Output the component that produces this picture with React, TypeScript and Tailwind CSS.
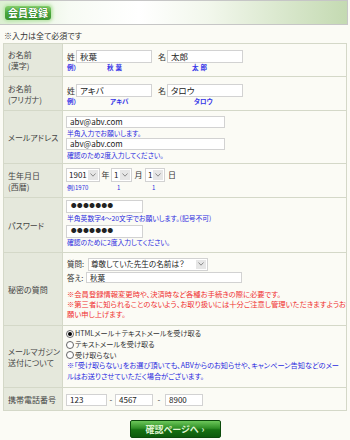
import React from "react";

function Inp({ cls, children }: { cls: string; children?: React.ReactNode }) {
  return (
    <div
      className={`bg-white border border-[#d2d2d2] flex items-center pl-[3px] text-[#222] overflow-hidden whitespace-nowrap shrink-0 ${cls}`}
    >
      {children}
    </div>
  );
}

function Sel({ cls, children }: { cls: string; children?: React.ReactNode }) {
  return (
    <div className={`bg-white border border-[#d2d2d2] flex items-stretch text-[#222] shrink-0 ${cls}`}>
      <span className="flex-1 flex items-center pl-[2px] whitespace-nowrap overflow-hidden">{children}</span>
      <span className="w-[10px] my-[1px] mr-[1px] bg-[#e6e6e6] flex items-center justify-center">
        <svg width="6" height="4" viewBox="0 0 6 4">
          <path d="M0.5 0.5 L3 3.2 L5.5 0.5" stroke="#8a8a8a" strokeWidth="1" fill="none" />
        </svg>
      </span>
    </div>
  );
}

function Radio({ checked }: { checked?: boolean }) {
  return (
    <span className="w-[8px] h-[8px] rounded-full border border-[#666] bg-white flex items-center justify-center mr-[1px] shrink-0">
      {checked && <span className="w-[4px] h-[4px] rounded-full bg-black" />}
    </span>
  );
}

const rowCls = "flex border-b border-[#d4d8c8]";
const labelCls =
  "w-[59px] shrink-0 bg-[#e5e8dc] border-r border-[#d4d8c8] flex flex-col justify-center pl-[4px] text-[8px] leading-[11px] text-[#444]";

export default function App() {
  return (
    <div className="w-[350px] h-[440px] overflow-hidden bg-[#fbfbf5] text-[#333] font-['Noto_Sans_CJK_JP','Liberation_Sans',sans-serif] [font-feature-settings:'palt']">
      {/* header */}
      <div className="w-[348px] h-[25px] border-t border-b border-r border-[#c6c6c6] bg-[linear-gradient(90deg,#dcefd2_0%,#f7fbf4_20%,#ffffff_40%,#f2f7ec_60%,#c4dab2_100%)] flex items-center pl-[5px]">
        <span className="h-[14px] px-[3px] rounded-[3px] bg-[linear-gradient(180deg,#86cf6e_0%,#4aa83c_50%,#3a9530_100%)] shadow-[0_0_3px_2px_#bfe6b0] flex items-center text-[10px] font-bold text-white leading-none [text-shadow:0_0_1px_#1d6a18,0_0_1px_#1d6a18]">
          会員登録
        </span>
      </div>

      {/* note */}
      <div className="h-[18px] pl-[4px] pt-[6px] text-[8px] leading-[10px] text-[#333]">※入力は全て必須です</div>

      {/* table */}
      <div className="mx-[3px] border-t border-l border-r border-[#d4d8c8]">
        {/* row 1 */}
        <div className={`${rowCls} h-[33px]`}>
          <div className={labelCls}>
            <span>お名前</span>
            <span>(漢字)</span>
          </div>
          <div className="flex-1 pl-[3px] pt-[6px]">
            <div className="flex items-center h-[13px] text-[8px]">
              <span className="w-[10px] pl-[1px]">姓</span>
              <Inp cls="w-[76px] h-[13px] text-[8.5px]">秋葉</Inp>
              <span className="ml-[6px] w-[9px]">名</span>
              <Inp cls="w-[76px] h-[13px] text-[8.5px]">太郎</Inp>
            </div>
            <div className="flex h-[10px] items-center text-[6.5px] font-bold text-[#3535e8]">
              <span className="w-[41px] pl-[1px]">例）</span>
              <span className="w-[85px] tracking-[2px]">秋葉</span>
              <span className="tracking-[2px]">太郎</span>
            </div>
          </div>
        </div>

        {/* row 2 */}
        <div className={`${rowCls} h-[34px]`}>
          <div className={labelCls}>
            <span>お名前</span>
            <span>(フリガナ)</span>
          </div>
          <div className="flex-1 pl-[3px] pt-[7px]">
            <div className="flex items-center h-[13px] text-[8px]">
              <span className="w-[10px] pl-[1px]">姓</span>
              <Inp cls="w-[76px] h-[13px] text-[8.5px]">アキバ</Inp>
              <span className="ml-[6px] w-[9px]">名</span>
              <Inp cls="w-[76px] h-[13px] text-[8.5px]">タロウ</Inp>
            </div>
            <div className="flex h-[9px] items-center text-[6.5px] font-bold text-[#3535e8]">
              <span className="w-[44px] pl-[1px]">例）</span>
              <span className="w-[84px]">アキバ</span>
              <span>タロウ</span>
            </div>
          </div>
        </div>

        {/* row 3 */}
        <div className={`${rowCls} h-[53px]`}>
          <div className={labelCls}>
            <span>メールアドレス</span>
          </div>
          <div className="flex-1 pl-[3px] pt-[5px]">
            <Inp cls="w-[159px] h-[12px] text-[8px]">abv@abv.com</Inp>
            <div className="h-[10px] leading-[10px] text-[6.8px] text-[#2a2ae0] pl-[1px]">半角入力でお願いします。</div>
            <Inp cls="w-[159px] h-[12px] text-[8px]">abv@abv.com</Inp>
            <div className="h-[10px] leading-[10px] text-[6.8px] text-[#2a2ae0] pl-[1px]">確認のため2度入力してください。</div>
          </div>
        </div>

        {/* row 4 */}
        <div className={`${rowCls} h-[34px]`}>
          <div className={labelCls}>
            <span>生年月日</span>
            <span>(西暦)</span>
          </div>
          <div className="flex-1 pl-[3px] pt-[4px]">
            <div className="flex items-center h-[14px] text-[8px]">
              <Sel cls="w-[34px] h-[14px] text-[8px]">1901</Sel>
              <span className="w-[11px] text-center">年</span>
              <Sel cls="w-[21px] h-[14px] text-[8px]">1</Sel>
              <span className="w-[13px] text-center">月</span>
              <Sel cls="w-[20px] h-[14px] text-[8px]">1</Sel>
              <span className="ml-[3px]">日</span>
            </div>
            <div className="flex h-[10px] items-center text-[6px] text-[#2a2ae0]">
              <span className="w-[51px] pl-[1px]">例)1970</span>
              <span className="w-[35px]">1</span>
              <span>1</span>
            </div>
          </div>
        </div>

        {/* row 5 */}
        <div className={`${rowCls} h-[55px]`}>
          <div className={labelCls}>
            <span>パスワード</span>
          </div>
          <div className="flex-1 pl-[3px] pt-[2px]">
            <Inp cls="w-[77px] h-[13px] text-[5.5px] tracking-[0.6px] pl-[4px]">●●●●●●●</Inp>
            <div className="h-[11px] leading-[11px] text-[6.8px] text-[#2a2ae0] pl-[1px] whitespace-nowrap">
              半角英数字4～20文字でお願いします。(記号不可)
            </div>
            <div className="mt-[1px]">
              <Inp cls="w-[77px] h-[13px] text-[5.5px] tracking-[0.6px] pl-[4px]">●●●●●●●</Inp>
            </div>
            <div className="h-[9px] leading-[9px] text-[6.8px] text-[#2a2ae0] pl-[1px]">確認のために2度入力してください。</div>
          </div>
        </div>

        {/* row 6 */}
        <div className={`${rowCls} h-[73px]`}>
          <div className={labelCls}>
            <span>秘密の質問</span>
          </div>
          <div className="flex-1 pl-[3px] pt-[5px]">
            <div className="flex items-center h-[12px] text-[7.5px]">
              <span className="w-[22px] pl-[1px]">質問:</span>
              <Sel cls="w-[120px] h-[13px] text-[7.6px]">尊敬していた先生の名前は？</Sel>
            </div>
            <div className="flex items-center h-[11px] mt-[2px] text-[7.5px]">
              <span className="w-[20px] pl-[1px]">答え:</span>
              <Inp cls="w-[156px] h-[11px] text-[7.6px] pl-[2px]">秋葉</Inp>
            </div>
            <div className="mt-[6px] text-[7.3px] leading-[10px] text-[#f03030] pl-[1px] whitespace-nowrap">
              ※会員登録情報変更時や、決済時など各種お手続きの際に必要です。
              <br />
              ※第三者に知られることのないよう、お取り扱いには十分ご注意し管理いただきますようお
              <br />
              願い申し上げます。
            </div>
          </div>
        </div>

        {/* row 7 */}
        <div className={`${rowCls} h-[62px]`}>
          <div className={labelCls}>
            <span>メールマガジン</span>
            <span>送付について</span>
          </div>
          <div className="flex-1 pl-[3px] pt-[2px] text-[7.2px]">
            <div className="flex items-center h-[11px]">
              <Radio checked />
              <span>HTMLメール＋テキストメールを受け取る</span>
            </div>
            <div className="flex items-center h-[11px]">
              <Radio />
              <span>テキストメールを受け取る</span>
            </div>
            <div className="flex items-center h-[10px]">
              <Radio />
              <span>受け取らない</span>
            </div>
            <div className="text-[7.2px] leading-[10.5px] text-[#2a2ae0] pl-[1px] whitespace-nowrap">
              ※「受け取らない」をお選び頂いても、ABVからのお知らせや、キャンペーン告知などのメー
              <br />
              ルはお送りさせていただく場合がございます。
            </div>
          </div>
        </div>

        {/* row 8 */}
        <div className={`${rowCls} h-[23px]`}>
          <div className={labelCls}>
            <span>携帯電話番号</span>
          </div>
          <div className="flex-1 pl-[3px] pt-[6px]">
            <div className="flex items-center h-[12px] text-[8px]">
              <Inp cls="w-[41px] h-[12px] text-[8px]">123</Inp>
              <span className="w-[8px] text-center">-</span>
              <Inp cls="w-[38px] h-[12px] text-[8px]">4567</Inp>
              <span className="w-[12px] text-center">-</span>
              <Inp cls="w-[38px] h-[12px] text-[8px]">8900</Inp>
            </div>
          </div>
        </div>
      </div>

      {/* button */}
      <div className="flex justify-center mt-[9px]">
        <div className="w-[91px] h-[18px] rounded-[2px] border border-[#0b4a0b] bg-[linear-gradient(180deg,#6cc75a_0%,#2f8f26_45%,#167012_55%,#0c5a0c_100%)] flex items-center justify-center text-[9px] font-bold text-[#dff3cf] leading-none">
          確認ページへ
          <span className="ml-[3px] text-[9px]">›</span>
        </div>
      </div>
    </div>
  );
}
